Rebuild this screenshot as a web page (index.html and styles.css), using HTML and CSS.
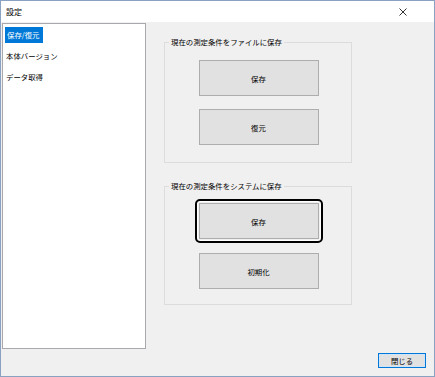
FILE: index.html
```html
<!DOCTYPE html>
<html lang="ja">
<head>
<meta charset="utf-8">
<title>設定</title>
<link rel="stylesheet" href="styles.css">
</head>
<body>
<div class="window">
  <div class="titlebar">
    <span class="title">設定</span>
    <svg class="close" width="8" height="8" viewBox="0 0 8 8"><path d="M0.5 0.5L7.5 7.5M7.5 0.5L0.5 7.5" stroke="#333" stroke-width="1" fill="none"/></svg>
  </div>
  <div class="main">
    <ul class="list">
      <li class="item selected">保存/復元</li>
      <li class="item">本体バージョン</li>
      <li class="item">データ取得</li>
    </ul>
    <div class="panel">
      <div class="group">
        <span class="legend">現在の測定条件をファイルに保存</span>
        <button class="btn">保存</button>
        <button class="btn">復元</button>
      </div>
      <div class="group group2">
        <span class="legend">現在の測定条件をシステムに保存</span>
        <button class="btn focused">保存</button>
        <button class="btn">初期化</button>
      </div>
    </div>
  </div>
  <div class="footer">
    <button class="closebtn">閉じる</button>
  </div>
</div>
</body>
</html>
```
FILE: styles.css
```css
* { box-sizing: border-box; }
html, body { margin: 0; padding: 0; background: #f0f0f0; }
body {
  font-family: "Noto Sans CJK JP", "Noto Sans", sans-serif;
  font-size: 7.4px;
  color: #000;
}
.window {
  width: 435px;
  height: 377px;
  border: 1px solid #8aa2c2;
  background: #f0f0f0;
  display: flex;
  flex-direction: column;
}
.titlebar {
  height: 21px;
  background: #fff;
  display: flex;
  align-items: center;
  justify-content: space-between;
  padding: 0 27px 0 5px;
  flex: none;
}
.title { font-size: 8px; line-height: 1; }
.close { display: block; margin-top: 1px; }
.main {
  display: flex;
  padding: 1px 0 0 1px;
  flex: none;
}
.list {
  list-style: none;
  margin: 0;
  padding: 3px 2px;
  width: 144px;
  height: 326px;
  background: #fff;
  border: 1px solid #a9a9ad;
}
.item {
  display: block;
  width: max-content;
  height: 16px;
  line-height: 16px;
  padding: 0 2px 0 1px;
  margin-bottom: 5px;
  white-space: nowrap;
}
.item.selected { background: #0078d7; color: #fff; padding: 0 4px 0 2px; }
.panel {
  display: flex;
  flex-direction: column;
  gap: 23px;
  padding: 19px 0 0 18px;
}
.group {
  position: relative;
  width: 188px;
  height: 121px;
  border: 1px solid #dcdcdc;
  display: flex;
  flex-direction: column;
  align-items: center;
  gap: 13px;
  padding-top: 17px;
}
.group2 { height: 119px; padding-top: 16px; gap: 14px; }
.legend {
  position: absolute;
  top: -7px;
  left: 4px;
  padding: 0 2px;
  background: #f0f0f0;
  line-height: 12px;
  white-space: nowrap;
}
.btn {
  position: relative;
  width: 120px;
  height: 36px;
  background: #e1e1e1;
  border: 1px solid #adadad;
  font-family: inherit;
  font-size: 7.4px;
  color: #000;
  padding: 0;
  margin-left: 1px;
}
.btn.focused::before {
  content: "";
  position: absolute;
  inset: -5px;
  border: 2px solid #000;
  border-radius: 5px;
  box-shadow: inset 0 0 0 1px #fff;
}
.footer {
  display: flex;
  justify-content: flex-end;
  padding: 4px 8px 0 0;
}
.closebtn {
  width: 48px;
  height: 15px;
  background: #e1e1e1;
  border: 1px solid #0078d7;
  box-shadow: inset 0 0 0 1px #cfe4f7;
  font-family: inherit;
  font-size: 7.4px;
  line-height: 1;
  color: #000;
  padding: 0;
}
```
